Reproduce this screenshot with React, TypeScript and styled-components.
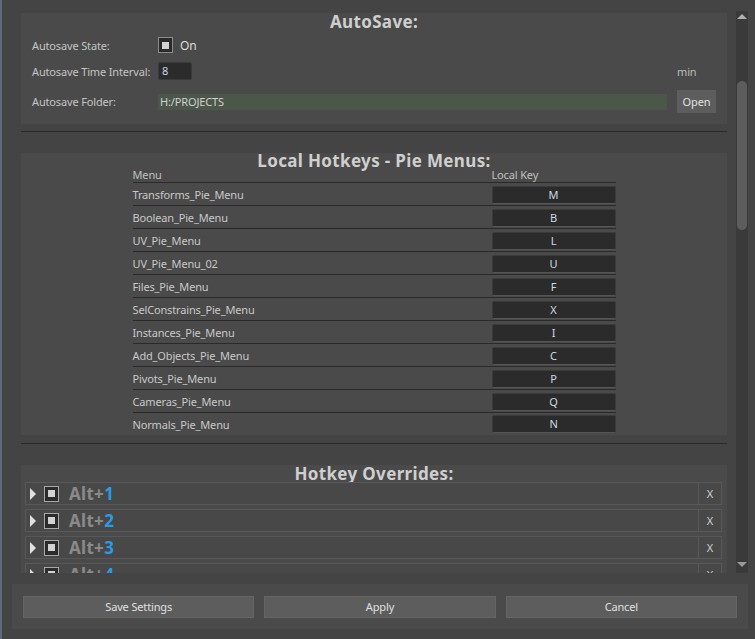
import React from "react";
import styled, { createGlobalStyle } from "styled-components";

const Global = createGlobalStyle`
  html, body { margin: 0; padding: 0; background: #444444; }
  body { font-family: "Noto Sans", "Open Sans", sans-serif; font-size: 11px; letter-spacing: -0.15px; color: #c8c8c8; }
  * { box-sizing: border-box; }
`;

const Window = styled.div`
  width: 755px;
  height: 639px;
  background: #444444;
  border-left: 2px solid #5d6b7b;
  display: flex;
  flex-direction: column;
  overflow: hidden;
`;

const ScrollArea = styled.div`
  height: 573px;
  display: flex;
  flex-direction: row;
`;

const Content = styled.div`
  flex: 1;
  padding: 13px 9px 0 19px;
  overflow: hidden;
  display: flex;
  flex-direction: column;
`;

const ScrollBar = styled.div`
  width: 12px;
  margin: 11px 7px 0 0;
  background: #3a3a3a;
  position: relative;
  display: flex;
  flex-direction: column;
  align-items: center;
`;

const Arrow = styled.div<{ $down?: boolean }>`
  width: 0;
  height: 0;
  margin-top: ${(p) => (p.$down ? "auto" : "3px")};
  margin-bottom: ${(p) => (p.$down ? "6px" : "0")};
  border-left: 5px solid transparent;
  border-right: 5px solid transparent;
  ${(p) => (p.$down ? "border-top: 5px solid #9a9a9a;" : "border-bottom: 5px solid #b0b0b0;")}
`;

const Thumb = styled.div`
  position: absolute;
  left: 1px;
  top: 70px;
  width: 10px;
  height: 149px;
  border-radius: 5px;
  background: #5d5d5d;
`;

const Panel = styled.div<{ $pad?: string }>`
  background: #4a4a4a;
  padding: ${(p) => p.$pad || "0"};
  display: flex;
  flex-direction: column;
  flex-shrink: 0;
`;

const Title = styled.div<{ $h: number; $clip?: boolean }>`
  font-weight: 700;
  font-size: 17px;
  letter-spacing: 0.35px;
  color: #cfcfcf;
  text-align: center;
  height: ${(p) => p.$h}px;
  line-height: ${(p) => p.$h}px;
  overflow: ${(p) => (p.$clip ? "hidden" : "visible")};
`;

const Separator = styled.div<{ $top: number; $bottom: number }>`
  height: 1px;
  background: #2a2a2a;
  margin: ${(p) => p.$top}px 0 ${(p) => p.$bottom}px;
  flex-shrink: 0;
`;

const FormRow = styled.div<{ $h: number; $mt: number }>`
  display: flex;
  align-items: center;
  height: ${(p) => p.$h}px;
  margin-top: ${(p) => p.$mt}px;
  gap: 10px;
`;

const Label = styled.div`
  width: 116px;
  flex-shrink: 0;
  color: #c4c4c4;
  white-space: nowrap;
`;

const Field = styled.div`
  flex: 1;
  display: flex;
  align-items: center;
  gap: 7px;
`;

const Side = styled.div`
  width: 39px;
  flex-shrink: 0;
  color: #bdbdbd;
`;

const Check = styled.div<{ $size: number }>`
  width: ${(p) => p.$size - 1}px;
  height: ${(p) => p.$size}px;
  background: #2b2b2b;
  border: 1px solid #8c8c8c;
  display: flex;
  align-items: center;
  justify-content: center;
  flex-shrink: 0;
  &::after {
    content: "";
    width: 7px;
    height: 7px;
    background: #d2d2d2;
  }
`;

const OnText = styled.span`
  font-size: 12px;
  color: #dcdcdc;
`;

const NumInput = styled.div`
  width: 34px;
  height: 18px;
  background: #2b2b2b;
  border: 1px solid #3a3a3a;
  border-radius: 2px;
  padding-left: 3px;
  line-height: 16px;
  color: #c8d4e0;
`;

const PathInput = styled.div`
  flex: 1;
  height: 16px;
  background: #4b5748;
  padding-left: 2px;
  line-height: 16px;
  color: #d0d0d0;
`;

const SmallButton = styled.div`
  width: 39px;
  height: 23px;
  background: #5d5d5d;
  color: #e2e2e2;
  display: flex;
  align-items: center;
  justify-content: center;
`;

const Table = styled.div`
  width: 483px;
  align-self: center;
  display: flex;
  flex-direction: column;
`;

const HeadRow = styled.div`
  display: flex;
  height: 14px;
  line-height: 12px;
  border-bottom: 1px solid #2a2a2a;
  color: #c0c0c0;
`;

const NameCell = styled.div`
  width: 359px;
  flex-shrink: 0;
  white-space: nowrap;
`;

const KeyHead = styled.div`
  flex: 1;
`;

const TRow = styled.div<{ $last?: boolean }>`
  display: flex;
  align-items: center;
  height: ${(p) => (p.$last ? 22 : 23)}px;
  padding: 2px 0 ${(p) => (p.$last ? 2 : 1)}px;
  border-bottom: ${(p) => (p.$last ? "none" : "1px solid #2a2a2a")};
  color: #c8c8c8;
`;

const KeyBox = styled.div`
  flex: 1;
  height: 18px;
  background: #2b2b2b;
  border: 1px solid #3b3b3b;
  border-bottom-color: #555555;
  border-radius: 2px;
  text-align: center;
  line-height: 16px;
  color: #d0d8e0;
`;

const OverrideList = styled.div`
  display: flex;
  flex-direction: column;
  gap: 4px;
  padding: 0 5px 0 4px;
`;

const OverrideRow = styled.div`
  height: 23px;
  border: 1px solid #585858;
  background: #484848;
  display: flex;
  align-items: center;
  flex-shrink: 0;
`;

const Tri = styled.div`
  width: 0;
  height: 0;
  margin-left: 4px;
  border-top: 6px solid transparent;
  border-bottom: 6px solid transparent;
  border-left: 6px solid #e0e0e0;
`;

const RowCheck = styled(Check)`
  margin-left: 8px;
  border-color: #a8a8a8;
`;

const AltText = styled.div`
  margin-left: 10px;
  font-weight: 700;
  font-size: 17px;
  letter-spacing: 0.3px;
  color: #8a8a8a;
  flex: 1;
  line-height: 20px;
`;

const Num = styled.span`
  color: #2a9be6;
`;

const XButton = styled.div`
  width: 23px;
  height: 100%;
  border-left: 1px solid #585858;
  display: flex;
  align-items: center;
  justify-content: center;
  color: #d0d0d0;
  font-size: 11px;
`;

const BottomBar = styled.div`
  margin: 11px 7px 0 10px;
  height: 45px;
  background: #4a4a4a;
  display: flex;
  align-items: center;
  gap: 10px;
  padding: 0 11px;
`;

const BigButton = styled.div`
  flex: 1;
  height: 22px;
  background: #5d5d5d;
  border: 1px solid #646464;
  color: #e0e0e0;
  display: flex;
  align-items: center;
  justify-content: center;
`;

const menus: [string, string][] = [
  ["Transforms_Pie_Menu", "M"],
  ["Boolean_Pie_Menu", "B"],
  ["UV_Pie_Menu", "L"],
  ["UV_Pie_Menu_02", "U"],
  ["Files_Pie_Menu", "F"],
  ["SelConstrains_Pie_Menu", "X"],
  ["Instances_Pie_Menu", "I"],
  ["Add_Objects_Pie_Menu", "C"],
  ["Pivots_Pie_Menu", "P"],
  ["Cameras_Pie_Menu", "Q"],
  ["Normals_Pie_Menu", "N"],
];

export default function App() {
  return (
    <>
      <Global />
      <Window>
        <ScrollArea>
          <Content>
            <Panel $pad="0 11px 11px 11px">
              <Title $h={18}>AutoSave:</Title>
              <FormRow $h={16} $mt={6}>
                <Label>Autosave State:</Label>
                <Field>
                  <Check $size={16} />
                  <OnText>On</OnText>
                </Field>
              </FormRow>
              <FormRow $h={18} $mt={9}>
                <Label>Autosave Time Interval:</Label>
                <Field>
                  <NumInput>8</NumInput>
                </Field>
                <Side>min</Side>
              </FormRow>
              <FormRow $h={23} $mt={10}>
                <Label>Autosave Folder:</Label>
                <Field>
                  <PathInput>H:/PROJECTS</PathInput>
                </Field>
                <SmallButton>Open</SmallButton>
              </FormRow>
            </Panel>
            <Separator $top={7} $bottom={21} />
            <Panel>
              <Title $h={16}>Local Hotkeys - Pie Menus:</Title>
              <Table>
                <HeadRow>
                  <NameCell>Menu</NameCell>
                  <KeyHead>Local Key</KeyHead>
                </HeadRow>
                {menus.map(([name, key], i) => (
                  <TRow key={name} $last={i === menus.length - 1}>
                    <NameCell>{name}</NameCell>
                    <KeyBox>{key}</KeyBox>
                  </TRow>
                ))}
              </Table>
            </Panel>
            <Separator $top={8} $bottom={21} />
            <Panel>
              <Title $h={17} $clip>Hotkey Overrides:</Title>
              <OverrideList>
                {[1, 2, 3, 4].map((n) => (
                  <OverrideRow key={n}>
                    <Tri />
                    <RowCheck $size={16} />
                    <AltText>
                      Alt+<Num>{n}</Num>
                    </AltText>
                    <XButton>X</XButton>
                  </OverrideRow>
                ))}
              </OverrideList>
            </Panel>
          </Content>
          <ScrollBar>
            <Arrow />
            <Thumb />
            <Arrow $down />
          </ScrollBar>
        </ScrollArea>
        <BottomBar>
          <BigButton>Save Settings</BigButton>
          <BigButton>Apply</BigButton>
          <BigButton>Cancel</BigButton>
        </BottomBar>
      </Window>
    </>
  );
}
